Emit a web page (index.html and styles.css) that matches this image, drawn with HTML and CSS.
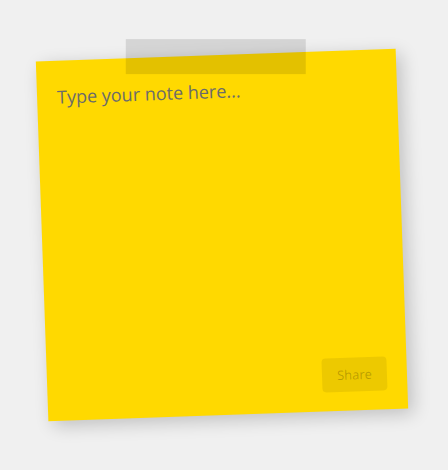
FILE: index.html
```html
<!DOCTYPE html>
<html lang="en">
<head>
<meta charset="utf-8">
<title>Sticky note</title>
<link rel="stylesheet" href="styles.css">
</head>
<body>
<main class="stage">
  <div class="note">
    <div class="tape"></div>
    <div class="note-text">Type your note here...</div>
    <button class="share-btn" type="button">Share</button>
  </div>
</main>
</body>
</html>
```
FILE: styles.css
```css
html, body {
  margin: 0;
  padding: 0;
  background: #f0f0f0;
}
.stage {
  min-height: 470px;
  display: flex;
  align-items: center;
  justify-content: center;
  padding-right: 4px;
  box-sizing: border-box;
}
.note {
  position: relative;
  width: 360px;
  height: 360px;
  box-sizing: border-box;
  background: #ffd900;
  transform: rotate(-2deg);
  box-shadow: 5px 5px 18px rgba(0, 0, 0, 0.2);
  padding: 22px 20px 19px 20px;
  display: flex;
  flex-direction: column;
}
.tape {
  position: absolute;
  top: -16px;
  left: 50%;
  width: 180px;
  height: 35px;
  margin-left: -90px;
  background: rgba(0, 0, 0, 0.11);
  transform: rotate(2deg);
}
.note-text {
  font-family: "Open Sans", "Noto Sans", sans-serif;
  font-size: 18px;
  line-height: 28px;
  color: #6b6b6b;
}
.share-btn {
  margin-top: auto;
  align-self: flex-end;
  width: 65px;
  height: 34px;
  border: none;
  border-radius: 4px;
  background: rgba(0, 0, 0, 0.07);
  color: rgba(0, 0, 0, 0.22);
  font-family: "Open Sans", "Noto Sans", sans-serif;
  font-size: 13px;
  padding: 0;
}
```
